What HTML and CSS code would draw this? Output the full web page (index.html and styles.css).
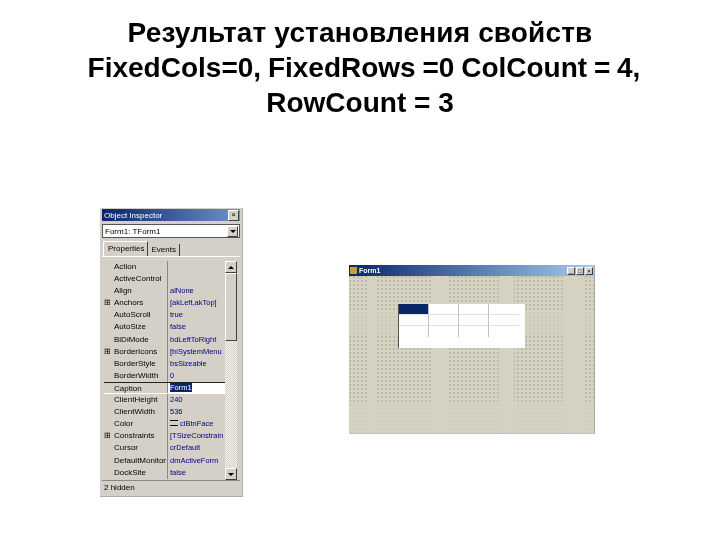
FILE: index.html
```html
<!DOCTYPE html>
<html lang="ru">
<head>
    <meta charset="UTF-8">
    <title>Результат установления свойств</title>
    <link rel="stylesheet" href="styles.css">
</head>
<body>
    <h1 class="title">
        <span class="line first">Результат установления свойств</span>
        <span class="line second">FixedCols=0, FixedRows =0 ColCount = 4,</span>
        <span class="line">RowCount = 3</span>
    </h1>

    <div class="stage">
        <!-- Object Inspector -->
        <div class="inspector">
            <div class="caption">
                <span>Object Inspector</span>
                <span class="btn">×</span>
            </div>
            <div class="combo">
                <span>Form1: TForm1</span>
                <span class="btn arrow-down"></span>
            </div>
            <div class="tabs">
                <span class="tab active">Properties</span>
                <span class="tab">Events</span>
            </div>
            <div class="panel">
                <div class="rows">
                    <div class="row"><span class="name">Action</span><span class="value"></span></div>
                    <div class="row"><span class="name">ActiveControl</span><span class="value"></span></div>
                    <div class="row"><span class="name">Align</span><span class="value">alNone</span></div>
                    <div class="row"><span class="name plus">Anchors</span><span class="value">[akLeft,akTop]</span></div>
                    <div class="row"><span class="name">AutoScroll</span><span class="value">true</span></div>
                    <div class="row"><span class="name">AutoSize</span><span class="value">false</span></div>
                    <div class="row"><span class="name">BiDiMode</span><span class="value">bdLeftToRight</span></div>
                    <div class="row"><span class="name plus">BorderIcons</span><span class="value">[biSystemMenu</span></div>
                    <div class="row"><span class="name">BorderStyle</span><span class="value">bsSizeable</span></div>
                    <div class="row"><span class="name">BorderWidth</span><span class="value">0</span></div>
                    <div class="row selected"><span class="name">Caption</span><span class="value"><span class="hilite">Form1</span></span></div>
                    <div class="row"><span class="name">ClientHeight</span><span class="value">240</span></div>
                    <div class="row"><span class="name">ClientWidth</span><span class="value">536</span></div>
                    <div class="row"><span class="name">Color</span><span class="value"><span class="swatch"></span>clBtnFace</span></div>
                    <div class="row"><span class="name plus">Constraints</span><span class="value">[TSizeConstrain</span></div>
                    <div class="row"><span class="name">Cursor</span><span class="value">crDefault</span></div>
                    <div class="row"><span class="name">DefaultMonitor</span><span class="value">dmActiveForm</span></div>
                    <div class="row"><span class="name">DockSite</span><span class="value">false</span></div>
                </div>
                <div class="scrollbar">
                    <span class="btn arrow-up"></span>
                    <span class="thumb"></span>
                    <span class="track"></span>
                    <span class="btn arrow-down"></span>
                </div>
            </div>
            <div class="status">2 hidden</div>
        </div>

        <!-- Form1 -->
        <div class="form">
            <div class="form-caption">
                <span class="form-icon"></span>
                <span class="form-title">Form1</span>
                <span class="btn">_</span>
                <span class="btn">□</span>
                <span class="btn">×</span>
            </div>
            <div class="form-body">
                <div class="grid">
                    <div class="cell fixed"></div><div class="cell"></div><div class="cell"></div><div class="cell"></div>
                    <div class="cell"></div><div class="cell"></div><div class="cell"></div><div class="cell"></div>
                    <div class="cell"></div><div class="cell"></div><div class="cell"></div><div class="cell"></div>
                </div>
            </div>
        </div>
    </div>
</body>
</html>
```

FILE: styles.css
```css
/* Slide */
body {
    margin: 0;
    width: 720px;
    height: 540px;
    overflow: hidden;
    background: #fff;
    font-family: 'Liberation Sans', Arial, sans-serif;
    color: #000;
}

.title {
    margin: 0;
    padding-top: 15px;
    font-size: 28px;
    line-height: 35px;
    font-weight: bold;
    text-align: center;
    filter: blur(0.3px);
}

.line {
    display: block;
}

.line.first {
    letter-spacing: 0.15px;
}

.line.second {
    padding-left: 8px;
    word-spacing: -1px;
}

.stage {
    display: flex;
    align-items: flex-start;
    padding-left: 100px;
    margin-top: 88px;
}

/* Common win95 button */
.btn {
    flex: none;
    display: flex;
    align-items: center;
    justify-content: center;
    width: 11px;
    height: 11px;
    background: #d4d0c8;
    border: 1px solid;
    border-color: #fff #404040 #404040 #fff;
    box-sizing: border-box;
    font-size: 8px;
    line-height: 1;
    color: #000;
}

.arrow-down::before,
.arrow-up::before {
    content: '';
    border-left: 3px solid transparent;
    border-right: 3px solid transparent;
}

.arrow-down::before {
    border-top: 3px solid #000;
}

.arrow-up::before {
    border-bottom: 3px solid #000;
}

/* Object Inspector */
.inspector {
    width: 143px;
    height: 289px;
    box-sizing: border-box;
    padding: 1px 2px 2px;
    background: #d4d0c8;
    border-right: 1px solid #b0aea6;
    border-bottom: 1px solid #b0aea6;
    display: flex;
    flex-direction: column;
    font-size: 8px;
}

.caption {
    height: 12px;
    flex: none;
    display: flex;
    align-items: center;
    justify-content: space-between;
    padding: 0 1px 0 2px;
    background: linear-gradient(90deg, #0a246a, #6f93c8);
    color: #fff;
    filter: blur(0.3px);
}

.combo {
    height: 14px;
    flex: none;
    margin-top: 3px;
    display: flex;
    align-items: center;
    justify-content: space-between;
    padding: 0 1px 0 2px;
    background: #fff;
    border: 1px solid #555;
    box-sizing: border-box;
    filter: blur(0.3px);
}

.tabs {
    flex: none;
    height: 15px;
    margin-top: 3px;
    display: flex;
    align-items: flex-end;
    padding-left: 1px;
}

.tab {
    height: 12px;
    line-height: 12px;
    padding: 0 3px;
    border-right: 1px solid #404040;
    filter: blur(0.3px);
}

.tab.active {
    height: 15px;
    line-height: 14px;
    padding: 0 3px 0 4px;
    border-left: 1px solid #fff;
    border-top: 1px solid #fff;
    box-sizing: border-box;
}

.panel {
    flex: 1;
    display: flex;
    min-height: 0;
    padding: 4px 3px 0 2px;
    border-top: 1px solid #fff;
}

.rows {
    flex: 1;
    min-width: 0;
}

.row {
    height: 12.1px;
    display: grid;
    grid-template-columns: 64px 1fr;
    line-height: 12px;
    white-space: nowrap;
    overflow: hidden;
}

.name {
    padding-left: 10px;
    border-right: 1px solid #8a8880;
    filter: blur(0.35px);
}

.name.plus {
    padding-left: 0;
}

.name.plus::before {
    content: '⊞';
    display: inline-block;
    width: 10px;
}

.value {
    padding-left: 2px;
    color: #000080;
    font-size: 7.5px;
    filter: blur(0.35px);
}

.swatch {
    display: inline-block;
    width: 8px;
    height: 6px;
    margin-right: 2px;
    border-top: 1px solid #000;
    border-bottom: 1px solid #000;
    box-sizing: border-box;
}

.row.selected {
    border-top: 1px solid #222;
    border-bottom: 1px solid #fff;
    box-sizing: border-box;
}

.row.selected .value {
    background: #fff;
    line-height: 10px;
}

.hilite {
    background: #0a246a;
    color: #fff;
}

.scrollbar {
    width: 12px;
    flex: none;
    display: flex;
    flex-direction: column;
    height: 219px;
}

.scrollbar .btn {
    width: 12px;
    height: 12px;
}

.thumb {
    height: 68px;
    background: #d4d0c8;
    border: 1px solid;
    border-color: #fff #404040 #404040 #fff;
    box-sizing: border-box;
}

.track {
    flex: 1;
    background: repeating-conic-gradient(#f4f3ee 0 25%, #d4d0c8 0 50%) 0 0 / 2px 2px;
}

.status {
    flex: none;
    height: 13px;
    line-height: 13px;
    padding-left: 2px;
    border-top: 1px solid #888;
    filter: blur(0.3px);
}

/* Form1 */
.form {
    width: 245px;
    height: 168px;
    margin-left: 106px;
    margin-top: 57px;
    background: #d5d2c2;
    border-right: 1px solid #a8a8b0;
    border-bottom: 1px solid #c0c0c8;
    display: flex;
    flex-direction: column;
}

.form-caption {
    flex: none;
    height: 11px;
    display: flex;
    align-items: center;
    gap: 1px;
    padding: 0 1px;
    background: linear-gradient(90deg, #0a246a, #a6caf0);
}

.form-caption .btn {
    width: 8px;
    height: 8px;
    font-size: 6px;
}

.form-icon {
    width: 7px;
    height: 7px;
    background: #c8a030;
    flex: none;
}

.form-title {
    flex: 1;
    margin-left: 1px;
    color: #fff;
    font-size: 7px;
    font-weight: bold;
    filter: blur(0.3px);
}

/* Сетка точек дизайнера, с полосами где точки почти пропадают */
.form-body {
    flex: 1;
    padding: 28px 0 0 49px;
    background-color: #d5d2c2;
    background-image:
        linear-gradient(90deg,
            transparent 19px, #d5d2c2 19px, #d5d2c2 28px, transparent 28px,
            transparent 83px, #d5d2c2 83px, #d5d2c2 99px, transparent 99px,
            transparent 150px, #d5d2c2 150px, #d5d2c2 165px, transparent 165px,
            transparent 215px, #d5d2c2 215px, #d5d2c2 235px, transparent 235px),
        linear-gradient(180deg,
            transparent 34px, rgba(213, 210, 194, 0.7) 34px, rgba(213, 210, 194, 0.7) 60px, transparent 60px,
            transparent 125px, rgba(213, 210, 194, 0.8) 125px),
        radial-gradient(circle at 1px 1px, #bab8ab 0.7px, transparent 1px);
    background-size: auto, auto, 4px 4px;
}

.grid {
    width: 127px;
    height: 44px;
    box-sizing: border-box;
    padding-right: 7px;
    background: #fff;
    border-left: 1px solid #555;
    display: grid;
    grid-template-columns: repeat(4, 30px);
    grid-auto-rows: 11px;
    align-content: start;
}

.cell {
    border-right: 1px solid #c0c0c0;
    border-bottom: 1px solid #e0e0e0;
}

.cell:nth-child(4n) {
    border-right: none;
}

.cell:nth-child(n+9) {
    border-bottom: none;
}

.cell.fixed {
    background: #0a246a;
}
```
